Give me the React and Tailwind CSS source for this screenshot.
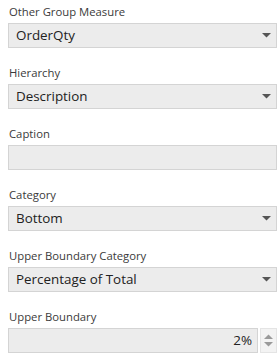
import React from "react";

const font = { fontFamily: '"Open Sans", "Noto Sans", sans-serif' };

function Arrow() {
  return (
    <svg width="9" height="5" viewBox="0 0 9 5" className="shrink-0">
      <path d="M0 0 L9 0 L4.5 4.5 Z" fill="#555" />
    </svg>
  );
}

function Label({ children }) {
  return <div className="h-[16px] mb-[3px] text-[11.3px] leading-[16px] text-[#3a3a3a] pl-[1px]">{children}</div>;
}

function Select({ value }) {
  return (
    <div className="h-[25px] mb-[17px] flex items-center justify-between bg-[#ececec] border border-[#d4d4d4] pl-[7px] pr-[5px]">
      <span className="text-[13.4px] text-[#222] leading-none">{value}</span>
      <Arrow />
    </div>
  );
}

export default function App() {
  return (
    <div className="w-[280px] h-[360px] bg-white pt-[4px] pl-[8px] pr-[3px]" style={font}>
      <Label>Other Group Measure</Label>
      <Select value="OrderQty" />
      <Label>Hierarchy</Label>
      <Select value="Description" />
      <Label>Caption</Label>
      <div className="h-[25px] mb-[17px] bg-[#ececec] border border-[#d4d4d4]" />
      <Label>Category</Label>
      <Select value="Bottom" />
      <Label>Upper Boundary Category</Label>
      <Select value="Percentage of Total" />
      <Label>Upper Boundary</Label>
      <div className="h-[25px] flex">
        <div className="flex-1 flex items-center justify-end bg-[#ececec] border border-[#d4d4d4] pr-[5px]">
          <span className="text-[13.4px] text-[#222] leading-none">2%</span>
        </div>
        <div className="w-[17px] ml-[2px] flex flex-col items-center justify-between py-[5px] bg-[#f3f3f3] border border-[#e4e4e4]">
          <svg width="9" height="5" viewBox="0 0 9 5"><path d="M0 5 L9 5 L4.5 0.5 Z" fill="#9a9a9a" /></svg>
          <svg width="9" height="5" viewBox="0 0 9 5"><path d="M0 0 L9 0 L4.5 4.5 Z" fill="#9a9a9a" /></svg>
        </div>
      </div>
    </div>
  );
}
